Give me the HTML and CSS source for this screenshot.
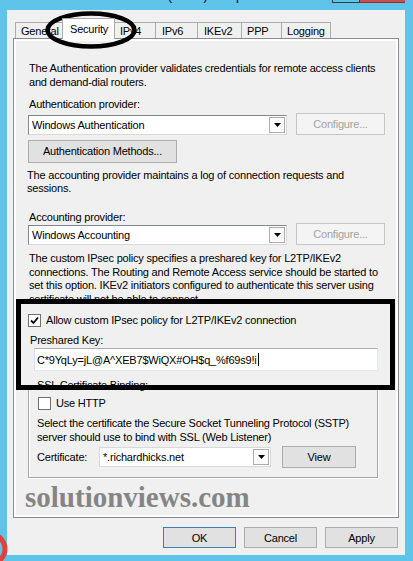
FILE: index.html
```html
<!DOCTYPE html>
<html lang="en">
<head>
  <meta charset="UTF-8">
  <title>VPN (local) Properties</title>
  <link rel="stylesheet" href="styles.css">
</head>
<body>
  <div class="window">
    <div class="titlebar">
      <span class="title">VPN (local) Properties</span>
      <div class="caption">
        <span class="cap-max"></span>
        <span class="cap-close"></span>
      </div>
    </div>

    <div class="dialog">
      <div class="tabs">
        <div class="tab tab-general">General</div>
        <div class="tab tab-security active">Security</div>
        <div class="tab tab-ipv4">IPv4</div>
        <div class="tab tab-ipv6">IPv6</div>
        <div class="tab tab-ikev2">IKEv2</div>
        <div class="tab tab-ppp">PPP</div>
        <div class="tab tab-logging">Logging</div>
      </div>

      <div class="panel">
        <p class="text p-auth">The Authentication provider validates credentials for remote access clients<br>and demand-dial routers.</p>

        <div class="text label-auth">Authentication provider:</div>
        <div class="row row-auth">
          <div class="combo combo-wide">
            <span>Windows Authentication</span>
            <span class="combo-arrow"><svg width="7" height="4" viewBox="0 0 7 4"><polygon points="0,0 7,0 3.5,4" fill="#000"/></svg></span>
          </div>
          <button class="btn btn-config" disabled>Configure...</button>
        </div>
        <button class="btn btn-methods">Authentication Methods...</button>

        <p class="text p-acct">The accounting provider maintains a log of connection requests and<br>sessions.</p>

        <div class="text label-acct">Accounting provider:</div>
        <div class="row row-acct">
          <div class="combo combo-wide">
            <span>Windows Accounting</span>
            <span class="combo-arrow"><svg width="7" height="4" viewBox="0 0 7 4"><polygon points="0,0 7,0 3.5,4" fill="#000"/></svg></span>
          </div>
          <button class="btn btn-config" disabled>Configure...</button>
        </div>

        <p class="text p-ipsec">The custom IPsec policy specifies a preshared key for L2TP/IKEv2<br>connections. The Routing and Remote Access service should be started to<br>set this option. IKEv2 initiators configured to authenticate this server using<br>certificate will not be able to connect.</p>

        <label class="check check-ipsec">
          <span class="box"><svg width="11" height="11" viewBox="0 0 11 11"><path d="M2 5.5 L4.5 8 L9 2.5" fill="none" stroke="#000" stroke-width="1.8"/></svg></span>
          <span>Allow custom IPsec policy for L2TP/IKEv2 connection</span>
        </label>

        <div class="text label-key">Preshared Key:</div>
        <div class="key-input">C*9YqLy=jL@A^XEB7$WiQX#OH$q_%f69s9!i<span class="caret"></span></div>

        <fieldset class="group">
          <legend>SSL Certificate Binding:</legend>
          <label class="check">
            <span class="box"></span>
            <span>Use HTTP</span>
          </label>
          <p class="text p-sstp">Select the certificate the Secure Socket Tunneling Protocol (SSTP)<br>server should use to bind with SSL (Web Listener)</p>
          <div class="row row-cert">
            <span class="cert-label">Certificate:</span>
            <div class="combo combo-cert">
              <span>*.richardhicks.net</span>
              <span class="combo-arrow"><svg width="7" height="4" viewBox="0 0 7 4"><polygon points="0,0 7,0 3.5,4" fill="#000"/></svg></span>
            </div>
            <button class="btn btn-view">View</button>
          </div>
        </fieldset>

        <div class="watermark">solutionviews.com</div>
      </div>

      <div class="actions">
        <button class="btn btn-action btn-default">OK</button>
        <button class="btn btn-action">Cancel</button>
        <button class="btn btn-action">Apply</button>
      </div>
    </div>

    <!-- hand-drawn annotations on top of the screenshot -->
    <svg class="marks" width="413" height="561" viewBox="0 0 413 561">
      <ellipse cx="91" cy="30" rx="43.5" ry="16.5" fill="none" stroke="#000" stroke-width="4.5"/>
      <rect x="18.5" y="301.5" width="374" height="86" fill="none" stroke="#000" stroke-width="5"/>
      <circle cx="-10" cy="549" r="15" fill="none" stroke="#e2403c" stroke-width="5"/>
    </svg>
  </div>
</body>
</html>
```

FILE: styles.css
```css
* {
  margin: 0;
  padding: 0;
  box-sizing: border-box;
}

html,
body {
  width: 413px;
  height: 561px;
  overflow: hidden;
}

body {
  font-family: 'Liberation Sans', Arial, sans-serif;
  font-size: 11px;
  letter-spacing: -0.2px;
  color: #000;
  background: #5ec4e9;
}

.window {
  position: relative;
  height: 561px;
  padding-bottom: 6px;
  display: flex;
  flex-direction: column;
}

/* title bar, only its lower edge is in the picture */
.titlebar {
  height: 10px;
  overflow: hidden;
  display: grid;
  grid-template-columns: 1fr auto 1fr;
}

.title {
  grid-column: 2;
  font-size: 15px;
  line-height: 18px;
  letter-spacing: 0;
  margin-top: -14px;
  color: #1a1a1a;
}

.caption {
  grid-column: 3;
  justify-self: end;
  display: flex;
  height: 3px;
  margin-right: 8px;
}

.cap-max {
  width: 28px;
  border: 1px solid #3b3b3b;
  border-top: 0;
}

.cap-close {
  width: 45px;
  background: #c7504c;
  border-bottom: 1px solid #8e2f2b;
}

.dialog {
  flex: 1;
  background: #f0f0f0;
  margin: 0 8px 0 7px;
  padding: 8px 7px 0 6px;
  display: flex;
  flex-direction: column;
}

/* tabs */
.tabs {
  display: flex;
  align-items: flex-end;
  height: 20px;
  margin-left: 2px;
}

.tab {
  height: 16px;
  line-height: 16px;
  padding-left: 5px;
  border: 1px solid #acacac;
  border-bottom: 0;
  margin-left: -1px;
  background: #f0f0f0;
  white-space: nowrap;
}

.tab-general { width: 48px; margin-left: 0; }
.tab-security { width: 53px; }
.tab-ipv4 { width: 42px; }
.tab-ipv6 { width: 43px; padding-left: 6px; }
.tab-ikev2 { width: 45px; padding-left: 6px; }
.tab-ppp { width: 41px; }
.tab-logging { width: 50px; }

.tab.active {
  position: relative;
  z-index: 1;
  height: 21px;
  margin-bottom: -1px;
  padding-top: 2px;
  padding-left: 7px;
  background: #fff;
}

.panel {
  width: 386px;
  height: 480px;
  border: 1px solid #898c95;
  box-shadow: inset 0 0 0 2px #fff;
  padding: 22px 0 0 14px;
  display: flex;
  flex-direction: column;
  align-items: flex-start;
}

.text {
  white-space: nowrap;
  line-height: 13.5px;
  padding-left: 1px;
}

.p-auth { line-height: 14px; }
.label-auth { margin-top: 9px; }
.row-auth { margin-top: 3px; }
.p-acct { margin-top: 6px; margin-left: -2px; }
.label-acct { margin-top: 15px; }
.row-acct { margin-top: 1px; }
.p-ipsec { margin-top: 7px; }

.row {
  display: flex;
  align-items: center;
}

/* combo boxes */
.combo {
  height: 20px;
  display: flex;
  align-items: center;
  justify-content: space-between;
  padding: 0 1px 0 3px;
  background: #fff;
  border: 1px solid #828790;
  border-right-color: #d9d9d9;
  border-bottom-color: #d9d9d9;
  white-space: nowrap;
}

.combo-wide { width: 259px; }

.combo-cert {
  width: 172px;
  border-color: #d9d9d9;
}

.combo-arrow {
  width: 16px;
  height: 16px;
  border: 1px solid #acacac;
  background: #fbfbfb;
  display: flex;
  align-items: center;
  justify-content: center;
}

/* buttons */
.btn {
  font: inherit;
  letter-spacing: inherit;
  color: #000;
  background: #e1e1e1;
  border: 1px solid #adadad;
  display: flex;
  align-items: center;
  justify-content: center;
}

.btn-config {
  width: 89px;
  height: 22px;
  margin-left: 9px;
  margin-top: -2px;
  color: #a3a3a3;
  background: #f4f4f4;
  border-color: #c5c5c5;
}

.btn-methods {
  width: 149px;
  height: 23px;
  margin-top: 5px;
}

.btn-view {
  width: 74px;
  height: 22px;
  margin-left: 11px;
}

/* checkboxes */
.check {
  display: flex;
  align-items: center;
  gap: 5px;
  height: 13px;
  line-height: 13px;
  white-space: nowrap;
}

.check-ipsec { margin-top: 8px; }

.box {
  width: 13px;
  height: 13px;
  background: #fff;
  border: 1px solid #707070;
  display: flex;
  align-items: center;
  justify-content: center;
}

.label-key {
  margin-top: 6.5px;
  padding-left: 2px;
}

.key-input {
  width: 344px;
  height: 23px;
  margin-top: 1px;
  margin-left: 6px;
  padding-left: 2px;
  display: flex;
  align-items: center;
  background: #fff;
  border: 1px solid #abadb3;
  border-color: #abadb3 #e3e9ef #e3e9ef #dbdfe6;
  white-space: nowrap;
}

.caret {
  width: 1px;
  height: 13px;
  background: #000;
  margin-left: 1px;
}

/* SSL group box */
.group {
  width: 350px;
  margin-top: 7.5px;
  padding: 5px 0 9px 9px;
  border: 1px solid #a7a7a7;
  box-shadow: inset 1px 1px 0 #fff, 1px 1px 0 #fff;
}

.group legend {
  line-height: 13.5px;
  padding: 0 1px;
  margin-left: -2px;
}

.p-sstp {
  margin-top: 7px;
  margin-left: -2px;
}

.row-cert {
  height: 22px;
  margin-top: 2px;
}

.cert-label {
  width: 62px;
  margin-left: -1px;
}

.watermark {
  margin-top: 5px;
  margin-left: -3px;
  font-family: 'Liberation Serif', 'Times New Roman', serif;
  font-weight: bold;
  font-size: 29px;
  line-height: 29px;
  letter-spacing: 0;
  color: #858585;
}

/* dialog buttons */
.actions {
  display: flex;
  justify-content: flex-end;
  gap: 8px;
  margin-top: 9px;
}

.btn-action {
  width: 73px;
  height: 21px;
}

.btn-default {
  border-color: #3c7fb1;
}

.marks {
  position: absolute;
  top: 0;
  left: 0;
  pointer-events: none;
}
```
